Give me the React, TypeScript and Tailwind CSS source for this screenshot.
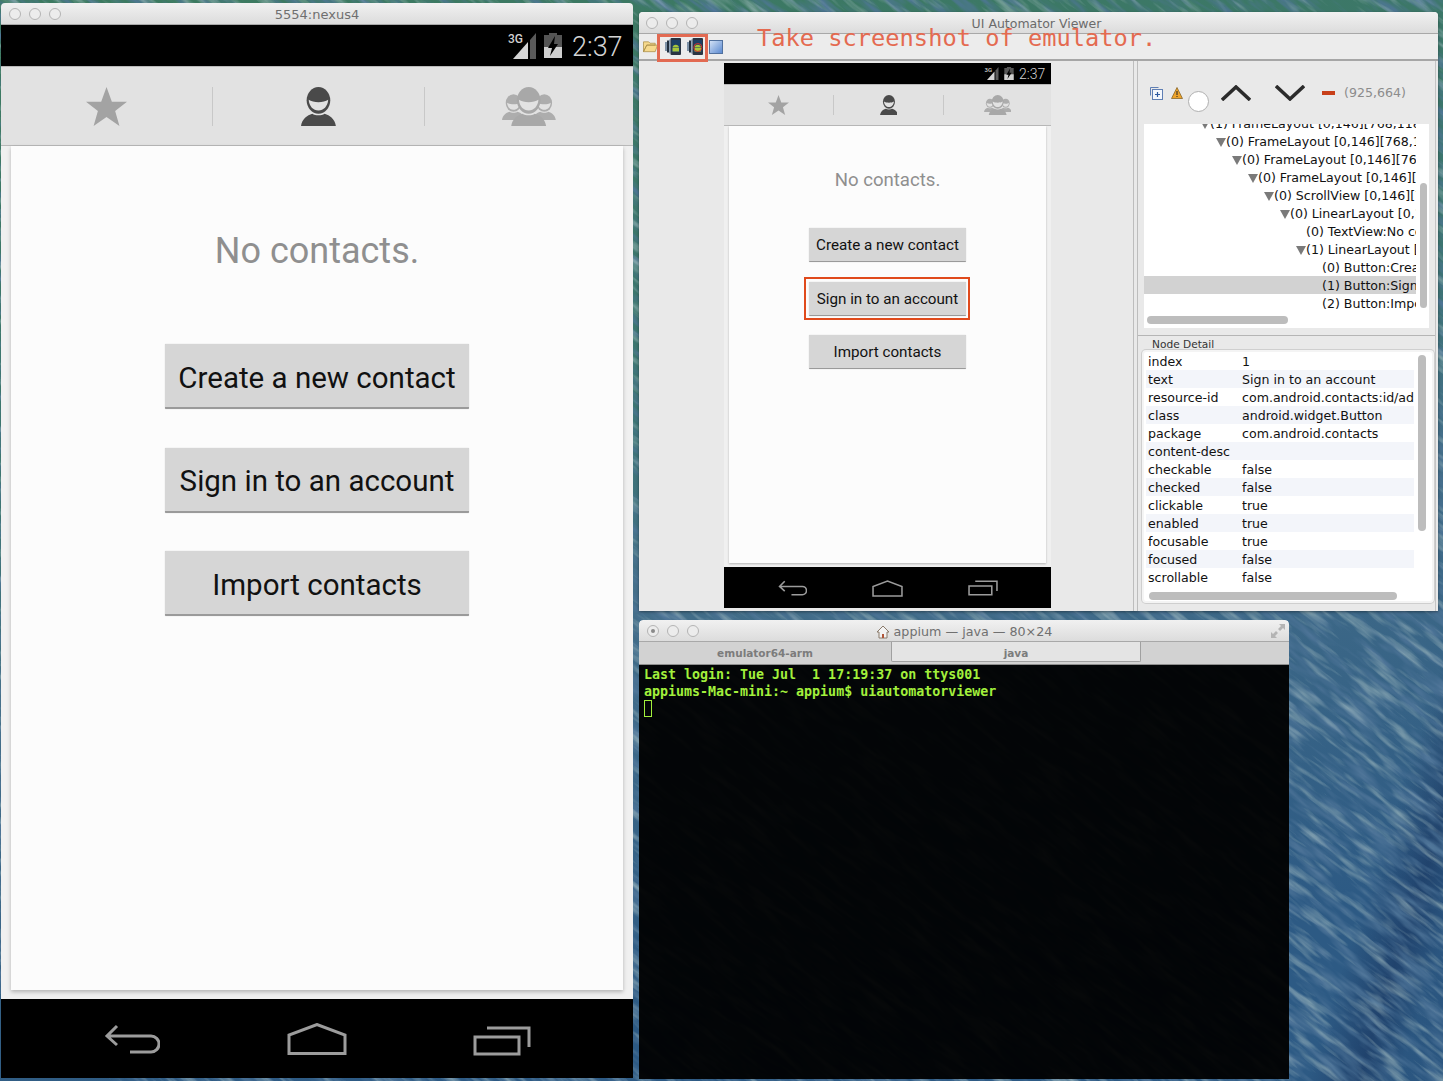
import { ReactNode } from 'react'

const treeRows = [
  { depth: 0, arrow: true, text: '(1) FrameLayout [0,146][768,1184]' },
  { depth: 1, arrow: true, text: '(0) FrameLayout [0,146][768,1184]' },
  { depth: 2, arrow: true, text: '(0) FrameLayout [0,146][768,1184]' },
  { depth: 3, arrow: true, text: '(0) FrameLayout [0,146][768,1184]' },
  { depth: 4, arrow: true, text: '(0) ScrollView [0,146][768,1184]' },
  { depth: 5, arrow: true, text: '(0) LinearLayout [0,146][768,1184]' },
  { depth: 6, arrow: false, text: '(0) TextView:No contacts.' },
  { depth: 6, arrow: true, text: '(1) LinearLayout [0,146][768,1184]' },
  { depth: 7, arrow: false, text: '(0) Button:Create a new contact' },
  { depth: 7, arrow: false, text: '(1) Button:Sign in to an account', selected: true },
  { depth: 7, arrow: false, text: '(2) Button:Import contacts' },
]

const details = [
  ['index', '1'],
  ['text', 'Sign in to an account'],
  ['resource-id', 'com.android.contacts:id/add_account_button'],
  ['class', 'android.widget.Button'],
  ['package', 'com.android.contacts'],
  ['content-desc', ''],
  ['checkable', 'false'],
  ['checked', 'false'],
  ['clickable', 'true'],
  ['enabled', 'true'],
  ['focusable', 'true'],
  ['focused', 'false'],
  ['scrollable', 'false'],
]

const big = {
  status: 'h-[41px] pr-[11px] gap-[10px]',
  signal: 'w-[28px] h-[26px] -mr-[2px]',
  battery: 'w-[18px] h-[25px]',
  clock: 'text-[27px] w-[50px] pt-[4px]',
  tabs: 'h-[80px] pt-[20px]',
  tab: 'w-[211px] h-[39px]',
  divider: 'h-[39px]',
  body: 'px-[10px] pb-[9px]',
  card: 'pt-[82px] shadow-[0_2px_4px_rgba(0,0,0,0.25)]',
  title: 'text-[36px] leading-[44px] pt-[1px]',
  buttons: 'mt-[71px] gap-[38.5px]',
  button: 'w-[304px] h-[65px] text-[29.5px] border-b-2 pt-[5px]',
  nav: 'h-[79px] pt-[24px]',
  navCell: 'w-[185px]',
  back: 'w-[56px] h-[30px] mt-[1px]',
  home: 'w-[60px] h-[32px]',
  recents: 'w-[58px] h-[30px] mt-[3px]',
}

const small = {
  status: 'h-[21px] pr-[6px] gap-[5px]',
  signal: 'w-[15px] h-[13px]',
  battery: 'w-[10px] h-[13px]',
  clock: 'text-[14px] w-[26px] pt-[2px]',
  tabs: 'h-[42px] pt-[10px]',
  tab: 'w-[109px] h-[20px]',
  divider: 'h-[20px]',
  body: 'px-[5px] pb-[4px]',
  card: 'pt-[43px] shadow-[0_1px_2px_rgba(0,0,0,0.25)]',
  title: 'text-[18.6px] leading-[22px]',
  buttons: 'mt-[37px] gap-[19.5px]',
  button: 'w-[157px] h-[34px] text-[15.2px] border-b pt-[2px]',
  nav: 'h-[41px] pt-[13px]',
  navCell: 'w-[95px]',
  back: 'w-[29px] h-[16px]',
  home: 'w-[31px] h-[17px]',
  recents: 'w-[30px] h-[16px]',
}

function Desktop() {
  return (
    <svg className="absolute inset-0" width="1443" height="1081" viewBox="0 0 1443 1081">
      <defs>
        <linearGradient id="sea" x1="0" y1="0" x2="0.25" y2="1">
          <stop offset="0" stopColor="#3c7a5f" />
          <stop offset="0.45" stopColor="#3c7570" />
          <stop offset="0.62" stopColor="#436e88" />
          <stop offset="1" stopColor="#2d5a84" />
        </linearGradient>
        <linearGradient id="band" x1="0" y1="0" x2="1" y2="1">
          <stop offset="0.55" stopColor="#16305a" stopOpacity="0" />
          <stop offset="0.72" stopColor="#16305a" stopOpacity="0.55" />
          <stop offset="0.85" stopColor="#16305a" stopOpacity="0.1" />
        </linearGradient>
        <filter id="darkWaves" x="0" y="0" width="100%" height="100%">
          <feTurbulence type="fractalNoise" baseFrequency="0.02 0.12" numOctaves="3" seed="4" />
          <feColorMatrix values="0 0 0 0 0.08  0 0 0 0 0.18  0 0 0 0 0.32  2.5 0 0 0 -1.1" />
        </filter>
        <filter id="lightWaves" x="0" y="0" width="100%" height="100%">
          <feTurbulence type="fractalNoise" baseFrequency="0.02 0.14" numOctaves="3" seed="9" />
          <feColorMatrix values="0 0 0 0 0.38  0 0 0 0 0.52  0 0 0 0 0.54  1.8 0 0 0 -0.9" />
        </filter>
      </defs>
      <rect width="1443" height="1081" fill="url(#sea)" />
      <rect x="1290" y="612" width="153" height="469" fill="url(#band)" />
      <rect x="-400" y="-400" width="2400" height="2200" filter="url(#darkWaves)" transform="rotate(38 1360 850)" />
      <rect x="-400" y="-400" width="2400" height="2200" filter="url(#lightWaves)" transform="rotate(38 1360 850)" />
    </svg>
  )
}

function Lights({ dot }: { dot?: boolean }) {
  return (
    <div className="flex gap-[8px]">
      {[0, 1, 2].map(i => (
        <div key={i} className="w-[12px] h-[12px] rounded-full border border-[#b4b4b4] bg-[#ececec] flex items-center justify-center">
          {dot && i === 0 && <div className="w-[4px] h-[4px] rounded-full bg-[#8a8a8a]" />}
        </div>
      ))}
    </div>
  )
}

function TitleBar({ children, left, dot }: { children: ReactNode; left: string; dot?: boolean }) {
  return (
    <div className="relative flex items-center justify-center h-[22px] pt-[3px] shrink-0 bg-gradient-to-b from-[#f1f1f1] to-[#dcdcdc] border-b border-[#a8a8a8] rounded-t-[4px]">
      <div className={`absolute top-[5px] ${left}`}><Lights dot={dot} /></div>
      {children}
    </div>
  )
}

function Person({ head, smile }: { head: string; smile: string }) {
  return (
    <g>
      <ellipse cx="17" cy="13" rx="11.5" ry="13" fill={head} />
      <path d="M7.5 12.5C12 15.5 22 15.5 26.5 12.5C26 19 22 23 17 23C12 23 8 19 7.5 12.5Z" fill={smile} />
      <path d="M0 38C1 31 6 27.5 11 26C14 28 20 28 23 26C28 27.5 33 31 34 38Z" fill={head} />
    </g>
  )
}

function StarIcon() {
  return (
    <svg viewBox="0 0 40 38" className="h-full">
      <path d="M20 0L25.2 14.3H40L28.4 23.3L32.6 38L20 29.3L7.4 38L11.6 23.3L0 14.3H14.8Z" fill="#a3a3a3" />
    </svg>
  )
}

function PersonIcon() {
  return (
    <svg viewBox="0 0 34 38" className="h-full">
      <Person head="#4a4a4a" smile="#e2e2e2" />
    </svg>
  )
}

function GroupIcon() {
  return (
    <svg viewBox="0 0 52 38" className="h-full">
      <g transform="translate(0 7) scale(0.66)"><Person head="#adadad" smile="#e2e2e2" /></g>
      <g transform="translate(30 7) scale(0.66)"><Person head="#adadad" smile="#e2e2e2" /></g>
      <g transform="translate(9 0)"><Person head="#a8a8a8" smile="#e2e2e2" /></g>
    </svg>
  )
}

function SignalIcon({ className }: { className: string }) {
  return (
    <svg viewBox="0 0 28 26" className={className}>
      <text x="0" y="10" fontSize="12" fontWeight="500" fill="#d0d0d0" textLength="15" lengthAdjust="spacingAndGlyphs" fontFamily="Roboto, sans-serif">3G</text>
      <path d="M5 26L20 9V26Z" fill="#d4d4d4" />
      <path d="M22 7L28 0V26H22Z" fill="#5a5a5a" />
    </svg>
  )
}

function BatteryIcon({ className }: { className: string }) {
  return (
    <svg viewBox="0 0 18 25" className={className}>
      <path d="M5 0H13V2H18V25H0V2H5Z" fill="#555" />
      <path d="M0 14H18V25H0Z" fill="#cfcfcf" />
      <path d="M11 3L4 15H8L6 23L14 11H10Z" fill="#000" />
    </svg>
  )
}

function AndroidScreen({ s }: { s: typeof big }) {
  return (
    <div className="flex flex-col h-full font-['Roboto',sans-serif]">
      <div className={`flex items-center justify-end bg-black shrink-0 ${s.status}`}>
        <SignalIcon className={s.signal} />
        <BatteryIcon className={s.battery} />
        <span className={`font-light text-[#d4d4d4] ${s.clock}`}>2:37</span>
      </div>
      <div className={`flex bg-[#e2e2e2] border-t border-b border-[#b9b9b9] shrink-0 ${s.tabs}`}>
        <div className={`flex justify-center shrink-0 ${s.tab}`}><StarIcon /></div>
        <div className={`w-px bg-[#c8c8c8] shrink-0 ${s.divider}`} />
        <div className={`flex justify-center shrink-0 ${s.tab}`}><PersonIcon /></div>
        <div className={`w-px bg-[#c8c8c8] shrink-0 ${s.divider}`} />
        <div className={`flex justify-center flex-1 ${s.tab}`}><GroupIcon /></div>
      </div>
      <div className={`flex-1 flex bg-[#f0f0f0] min-h-0 ${s.body}`}>
        <div className={`flex-1 flex flex-col items-center bg-[#fcfcfc] ${s.card}`}>
          <div className={`text-[#8f8f8f] ${s.title}`}>No contacts.</div>
          <div className={`flex flex-col ${s.buttons}`}>
            {['Create a new contact', 'Sign in to an account', 'Import contacts'].map(label => (
              <div key={label} className={`flex items-center justify-center bg-[#d6d6d6] border-[#9a9a9a] rounded-[1px] text-[#111] shadow-[0_0_1px_rgba(0,0,0,0.3)] ${s.button}`}>
                {label}
              </div>
            ))}
          </div>
        </div>
      </div>
      <div className={`flex justify-center items-start bg-black shrink-0 ${s.nav}`}>
        <div className={`flex justify-center ${s.navCell}`}>
          <svg viewBox="0 0 56 30" className={s.back} fill="none" stroke="#9c9c9c" strokeWidth="3">
            <path d="M13 2L3 12L13 21M3 12H47A8 8 0 0 1 47 28H26" />
          </svg>
        </div>
        <div className={`flex justify-center ${s.navCell}`}>
          <svg viewBox="0 0 60 32" className={s.home} fill="none" stroke="#9c9c9c" strokeWidth="3">
            <path d="M2 30.5V12L30 1.5L58 12V30.5Z" />
          </svg>
        </div>
        <div className={`flex justify-center ${s.navCell}`}>
          <svg viewBox="0 0 58 30" className={s.recents} fill="none" stroke="#9c9c9c" strokeWidth="3">
            <path d="M2 11H46V28H2ZM14 2H56V21" />
          </svg>
        </div>
      </div>
    </div>
  )
}

function DeviceIcon({ stop }: { stop?: boolean }) {
  return (
    <svg viewBox="0 0 16 17" className="w-[16px] h-[17px]">
      <rect x="0" y="4" width="2" height="9" fill="#7f93a8" />
      <rect x="2" y="2.5" width="2" height="12" fill="#22303f" />
      <rect x="4" y="1.5" width="1.5" height="14" fill="#8ea2b6" />
      <rect x="5.5" y="0" width="10.5" height="17" rx="1" fill="#2a3442" />
      <rect x="6.5" y="2" width="8.5" height="12" fill="#1b3f66" />
      <path d="M7.5 9.5A3.3 3.3 0 0 1 14 9.5Z" fill="#a6c53c" />
      <rect x="7.5" y="10" width="6.5" height="3.5" fill="#a6c53c" />
      {stop && <circle cx="10.8" cy="9.5" r="4" fill="none" stroke="#d6342a" strokeWidth="1" />}
    </svg>
  )
}

function Toolbar() {
  return (
    <div className="flex items-center h-[27px] pl-[4px] bg-[#ececec] border-b-2 border-[#a6a6a6] shrink-0">
      <svg viewBox="0 0 16 13" className="w-[15px] h-[13px]">
        <path d="M.5 12V1.5H6L7.5 3H13V5H4L.5 12H13L15.5 5H4Z" fill="#f6d98c" stroke="#a98d4a" strokeWidth="0.8" />
      </svg>
      <div className="ml-[7px]"><DeviceIcon /></div>
      <div className="ml-[6px]"><DeviceIcon stop /></div>
      <div className="ml-[6px] w-[14px] h-[14px] bg-gradient-to-br from-[#d3e1f5] to-[#5c8ad0] border border-[#51719f]" />
    </div>
  )
}

function TreeToolbar() {
  return (
    <div className="flex items-center h-[63px] pl-[12px] shrink-0">
      <svg viewBox="0 0 13 13" className="w-[13px] h-[13px] mt-[1px]" fill="none" stroke="#5f7fb4">
        <path d="M.5 8.5V.5H8.5" />
        <rect x="2.5" y="2.5" width="10" height="10" fill="#f4f7fc" />
        <path d="M7.5 5V10M5 7.5H10" stroke="#2e5aa0" strokeWidth="1.2" />
      </svg>
      <svg viewBox="0 0 12 12" className="w-[12px] h-[12px] ml-[8px]">
        <path d="M6 .5L11.5 11.5H.5Z" fill="#eea32a" stroke="#7b5a1c" strokeWidth="0.7" />
        <path d="M5.5 4H6.5V8H5.5ZM5.5 9H6.5V10H5.5Z" fill="#222" />
      </svg>
      <div className="w-[21px] h-[21px] rounded-full bg-white border border-[#b0b0b0] ml-[5px] mt-[17px]" />
      <svg viewBox="0 0 30 16" className="w-[30px] h-[16px] ml-[12px]" fill="none" stroke="#2b2b2b" strokeWidth="3.5">
        <path d="M1 15L15 2L29 15" />
      </svg>
      <svg viewBox="0 0 30 16" className="w-[30px] h-[16px] ml-[24px]" fill="none" stroke="#2b2b2b" strokeWidth="3.5">
        <path d="M1 1L15 14L29 1" />
      </svg>
      <div className="w-[13px] h-[4px] bg-[#c8401a] ml-[17px]" />
      <span className="ml-[9px] mt-[2px] text-[12.6px] text-[#8c8c8c]">(925,664)</span>
    </div>
  )
}

function Tree() {
  return (
    <div className="relative mx-[6px] h-[204px] bg-white overflow-hidden shrink-0">
      <div className="w-[272px] h-[188px] overflow-hidden">
        <div className="-mt-[10px]">
          {treeRows.map((row, i) => (
            <div
              key={i}
              className={`flex items-center h-[18px] pt-[2px] whitespace-nowrap text-[12.6px] text-[#111] ${row.selected ? 'bg-[#d2d2d2]' : ''}`}
              style={{ paddingLeft: 56 + row.depth * 16 }}
            >
              {row.arrow ? (
                <span className="w-[10px] h-0 border-x-[5px] border-x-transparent border-t-[9px] border-t-[#7a7a7a] shrink-0" />
              ) : (
                <span className="w-[10px] shrink-0" />
              )}
              {row.text}
            </div>
          ))}
        </div>
      </div>
      <div className="absolute left-[276px] top-[59px] w-[7px] h-[125px] rounded-full bg-[#bdbdbd]" />
      <div className="absolute left-[3px] top-[192px] w-[141px] h-[8px] rounded-full bg-[#bdbdbd]" />
    </div>
  )
}

function NodeDetail() {
  return (
    <div className="flex-1 flex flex-col min-h-0 border-t border-[#b5b5b5] mt-[7px]">
      <div className="pl-[14px] h-[14px] pt-[1px] text-[10.6px] leading-[14px] text-[#333]">Node Detail</div>
      <div className="relative ml-[4px] mr-[1px] h-[253px] rounded-[4px] border-2 border-[#f4f4f4] bg-white overflow-hidden shrink-0 shadow-[0_0_0_1px_#cfcfcf]">
        <div className="ml-[2px] w-[268px] overflow-hidden">
          {details.map(([key, value], i) => (
            <div key={key} className={`flex h-[18px] pt-[2px] items-center whitespace-nowrap text-[12.6px] text-[#111] pl-[2px] ${i % 2 ? 'bg-[#f3f5fa]' : ''}`}>
              <span className="w-[94px] shrink-0">{key}</span>
              <span>{value}</span>
            </div>
          ))}
        </div>
        <div className="absolute left-[274px] top-[3px] w-[8px] h-[176px] rounded-full bg-[#bdbdbd]" />
        <div className="absolute left-[5px] top-[240px] w-[248px] h-[8px] rounded-full bg-[#bdbdbd]" />
      </div>
    </div>
  )
}

function Viewer() {
  return (
    <div className="absolute left-[639px] top-[12px] w-[799px] h-[599px] flex flex-col bg-[#e9e9e9] rounded-t-[4px] font-['DejaVu_Sans',sans-serif] shadow-[0_1px_3px_rgba(0,0,0,0.4)]">
      <TitleBar left="left-[7px]">
        <span className="-ml-[4px] text-[12.5px] text-[#6b6b6b]">UI Automator Viewer</span>
      </TitleBar>
      <Toolbar />
      <div className="flex-1 flex min-h-0">
        <div className="w-[494px] pl-[85px] pt-[2px] bg-[#e9e9e9]">
          <div className="w-[327px] h-[545px]"><AndroidScreen s={small} /></div>
        </div>
        <div className="w-[5px] bg-[#e9e9e9] border-x border-[#bdbdbd]" />
        <div className="flex-1 flex flex-col min-w-0 mr-[2px] border-r border-[#c4c4c4]">
          <TreeToolbar />
          <Tree />
          <NodeDetail />
        </div>
      </div>
    </div>
  )
}

function Terminal() {
  return (
    <div className="absolute left-[639px] top-[620px] w-[650px] h-[459px] flex flex-col rounded-t-[4px] overflow-hidden">
      <TitleBar left="left-[8px]" dot>
        <svg viewBox="0 0 14 14" className="w-[14px] h-[14px] mr-[4px]" fill="#f3f3f3" stroke="#8a7a6a">
          <path d="M1 7L7 1L13 7H11V13H3V7Z" />
          <rect x="6" y="9" width="2" height="4" fill="#b0563a" stroke="none" />
        </svg>
        <span className="font-['DejaVu_Sans',sans-serif] text-[12.7px] text-[#707070]">appium — java — 80×24</span>
        <svg viewBox="0 0 14 14" className="absolute right-[4px] top-[4px] w-[14px] h-[14px]" fill="#b4b4b4">
          <path d="M8 0H14V6L12 4L9 7L7 5L10 2ZM6 14H0V8L2 10L5 7L7 9L4 12Z" />
        </svg>
      </TitleBar>
      <div className="flex h-[23px] bg-[#d2d2d2] border-b border-[#8e8e8e] text-[10.5px] font-bold text-[#7c7c7c] shrink-0 font-['DejaVu_Sans',sans-serif]">
        <div className="w-[252px] flex items-center justify-center pt-[2px]">emulator64-arm</div>
        <div className="w-[250px] h-[20px] pt-[4px] flex items-center justify-center bg-[#e4e4e4] border-x border-b border-[#a0a0a0] rounded-b-[2px]">java</div>
      </div>
      <div className="flex-1 bg-black/95 pl-[5px] pt-[1px] font-['DejaVu_Sans_Mono',monospace] font-bold text-[13.3px] leading-[17px] text-[#a2f03c] whitespace-pre">
        <div>Last login: Tue Jul  1 17:19:37 on ttys001</div>
        <div>appiums-Mac-mini:~ appium$ uiautomatorviewer</div>
        <div className="w-[8px] h-[17px] border border-[#a2f03c]" />
      </div>
    </div>
  )
}

export default function App() {
  return (
    <div className="relative w-[1443px] h-[1081px] overflow-hidden bg-[#2f5c85]">
      <Desktop />
      <div className="absolute left-[1px] top-[3px] w-[632px] h-[1075px] flex flex-col">
        <TitleBar left="left-[8px]">
          <span className="font-['DejaVu_Sans',sans-serif] text-[13px] text-[#6f6f6f]">5554:nexus4</span>
        </TitleBar>
        <div className="flex-1 min-h-0"><AndroidScreen s={big} /></div>
      </div>
      <Viewer />
      <Terminal />
      {/* annotations pasted over the screenshot */}
      <div className="absolute left-[657px] top-[34px] w-[51px] h-[28px] border-[3px] border-[#e26a52]" />
      <div className="absolute left-[757px] top-[23px] font-['DejaVu_Sans_Mono',monospace] text-[23.7px] leading-[30px] text-[#e46a50] whitespace-pre">Take screenshot of emulator.</div>
      <div className="absolute left-[804px] top-[277px] w-[166px] h-[43px] border-2 border-[#e04a1c]" />
    </div>
  )
}
